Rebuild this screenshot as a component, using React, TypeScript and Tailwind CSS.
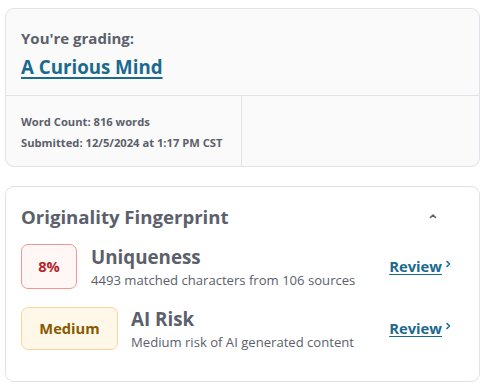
import React from 'react';

const font = { fontFamily: '"Open Sans", "Noto Sans", sans-serif' };

const Chevron = ({ up = false }: { up?: boolean }) => (
  <svg width="8" height="8" viewBox="0 0 8 8" fill="none">
    {up ? (
      <path d="M1.5 5.5 L4 3 L6.5 5.5" stroke="#5b606b" strokeWidth="1.6" strokeLinecap="round" strokeLinejoin="round" />
    ) : (
      <path d="M3 1.5 L5.5 4 L3 6.5" stroke="#1b6a8d" strokeWidth="1.6" strokeLinecap="round" strokeLinejoin="round" />
    )}
  </svg>
);

interface Row {
  badge: string;
  badgeClass: string;
  title: string;
  sub: string;
  gap: string;
}

const rows: Row[] = [
  {
    badge: '8%',
    badgeClass: 'w-[56px] h-[45px] bg-[#fff6f6] border-[#f5968f] text-[#b3262b]',
    title: 'Uniqueness',
    sub: '4493 matched characters from 106 sources',
    gap: 'ml-[14px]',
  },
  {
    badge: 'Medium',
    badgeClass: 'w-[97px] h-[43px] bg-[#fff8e9] border-[#fad49c] text-[#875a00]',
    title: 'AI Risk',
    sub: 'Medium risk of AI generated content',
    gap: 'ml-[13px]',
  },
];

export default function App() {
  return (
    <div className="w-[492px] h-[392px] bg-white pt-[8px] px-[5px]" style={font}>
      {/* grading card */}
      <div className="w-[475px] h-[159px] bg-[#fafafa] border border-[#dfe2e7] rounded-[9px] flex flex-col">
        <div className="h-[87px] px-[15px] pt-[18px] border-b border-[#dfe2e7]">
          <div className="text-[15px] leading-[22px] font-bold text-[#5b606b]">You're grading:</div>
          <a href="#" className="block mt-[5px] text-[18.7px] leading-[26px] font-bold text-[#1b6a8d] underline underline-offset-[3px] decoration-[1.5px] w-max">
            A Curious Mind
          </a>
        </div>
        <div className="flex flex-1">
          <div className="w-[236px] border-r border-[#dfe2e7] px-[15px] pt-[15px] text-[11.2px] font-bold text-[#5b606b] leading-[21px]">
            <div>Word Count: 816 words</div>
            <div>Submitted: 12/5/2024 at 1:17 PM CST</div>
          </div>
          <div className="flex-1" />
        </div>
      </div>

      {/* originality card */}
      <div className="mt-[19px] w-[475px] h-[196px] bg-white border border-[#dfe2e7] rounded-[9px] px-[15px] pt-[16px]">
        <div className="flex items-center justify-between h-[28px]">
          <div className="text-[18.6px] leading-[28px] font-bold text-[#5b606b] mt-[-1px]">Originality Fingerprint</div>
          <div className="mr-[27px] mt-[-2px]"><Chevron up /></div>
        </div>
        <div className="mt-[13px] flex flex-col gap-[17px]">
          {rows.map((r) => (
            <div key={r.title} className="flex items-center h-[45px]">
              <div className={`border rounded-[7px] flex items-center justify-center text-[14.7px] font-bold ${r.badgeClass}`}>
                {r.badge}
              </div>
              <div className={`${r.gap} flex-1 pt-[2px]`}>
                <div className="text-[18.8px] leading-[23px] font-bold text-[#5b606b]">{r.title}</div>
                <div className="mt-[1px] text-[13.1px] leading-[20px] text-[#5b606b]">{r.sub}</div>
              </div>
              <div className="flex items-center gap-[2px] mr-[12px]">
                <a href="#" className="text-[14.8px] font-bold text-[#1b6a8d] underline underline-offset-[2px]">Review</a>
                <div className="mt-[-6px]"><Chevron /></div>
              </div>
            </div>
          ))}
        </div>
      </div>
    </div>
  );
}
